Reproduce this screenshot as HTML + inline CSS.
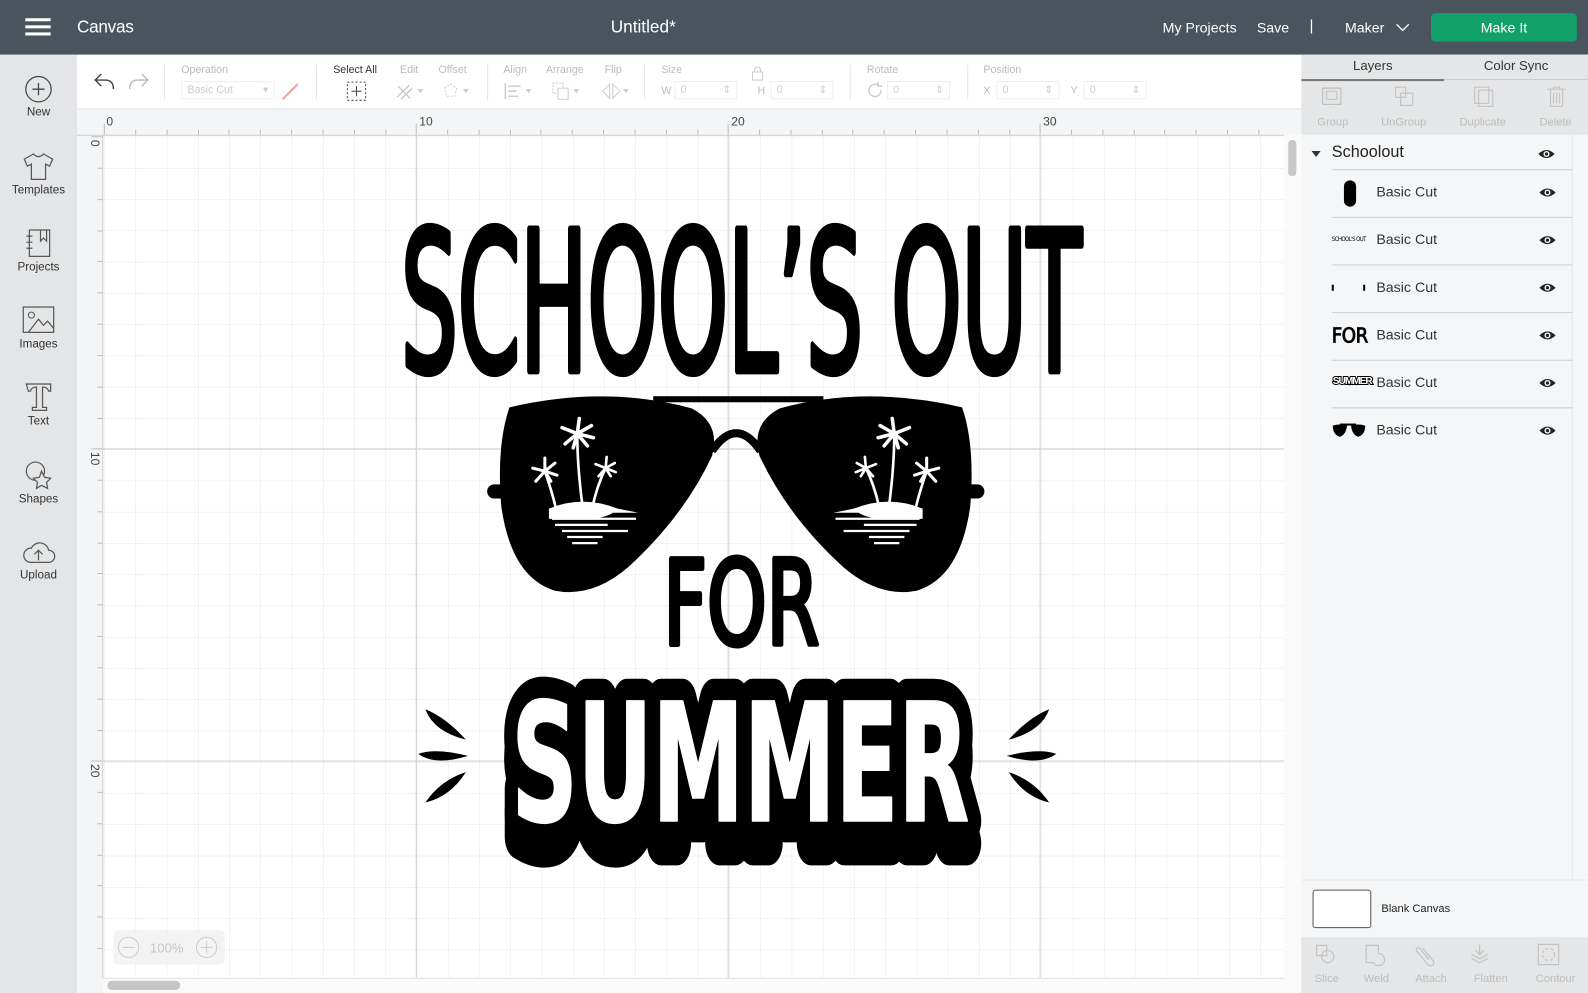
<!DOCTYPE html>
<html><head><meta charset="utf-8"><style>
*{margin:0;padding:0;box-sizing:border-box}
html,body{width:1588px;height:993px;overflow:hidden;background:#fff;font-family:"Liberation Sans",sans-serif}
#w{position:absolute;left:0;top:0;width:1568px;height:980px;transform:scale(1.01276,1.01327);transform-origin:0 0}
.a{position:absolute}
.top{left:0;top:0;width:1568px;height:54px;background:#4a545c;color:#fff}
.side{left:0;top:54px;width:76px;height:926px;background:#e4e5e6}
.si{position:absolute;left:0;width:76px;text-align:center;font-size:11.5px;color:#333}
.si svg{display:block;margin:0 auto 3px}
.tb{left:76px;top:54px;width:1209px;height:54px;background:#fff;border-bottom:1px solid #e2e2e2}
.lb{position:absolute;font-size:10.5px;color:#bbb}
.inp{position:absolute;border:1px solid #eee;height:18px;font-size:10.5px;color:#ccc;padding:2px 5px}
.sep{position:absolute;top:10px;width:1px;height:34px;background:#e5e5e5}
.rp{left:1285px;top:54px;width:283px;height:926px;background:#f5f6f7}
.row{position:absolute;left:1315px;width:238px;height:47px;border-top:1.5px solid #cfd0d1}
.row span{position:absolute;left:44px;top:13px;font-size:14px;color:#333}
.eye{position:absolute;right:16px;top:16px}
.bt{position:absolute;font-size:11px;color:#bdbdbd;text-align:center}
</style></head><body><div id="w">

<div class="a top">
 <div class="a" style="left:25px;top:18px;width:25px;height:3px;background:#fff;box-shadow:0 7px 0 #fff,0 14px 0 #fff"></div>
 <div class="a" style="left:76px;top:17px;font-size:17px;letter-spacing:-0.3px">Canvas</div>
 <div class="a" style="left:603px;top:17px;font-size:17px">Untitled*</div>
 <div class="a" style="left:1148px;top:19px;font-size:14px">My Projects</div>
 <div class="a" style="left:1241px;top:19px;font-size:14px">Save</div>
 <div class="a" style="left:1293px;top:17px;font-size:15px">|</div>
 <div class="a" style="left:1328px;top:19px;font-size:14px">Maker</div>
 <svg class="a" style="left:1378px;top:23px" width="14" height="9"><path d="M1 1l6 6 6-6" stroke="#fff" fill="none" stroke-width="1.3"/></svg>
 <div class="a" style="left:1413px;top:13px;width:144px;height:28px;background:#12a16b;border-radius:4px;text-align:center;line-height:28px;font-size:14px">Make It</div>
</div>

<div class="a side">
 <div class="si" style="top:20px"><svg width="28" height="28"><circle cx="14" cy="14" r="12.5" fill="none" stroke="#444" stroke-width="1.2"/><path d="M14 8v12M8 14h12" stroke="#444" stroke-width="1.3"/></svg>New</div>
 <div class="si" style="top:95px"><svg width="32" height="30"><path d="M11 3l-9 5 3 7 4-2v15h14V13l4 2 3-7-9-5q-5 5-10 0z" fill="none" stroke="#555" stroke-width="1.2"/></svg>Templates</div>
 <div class="si" style="top:171px"><svg width="30" height="30"><rect x="6" y="2" width="20" height="26" fill="none" stroke="#555" stroke-width="1.2"/><path d="M17 2v11l3-3 3 3V2M3 8h6M3 14h6M3 20h6" stroke="#555" fill="none" stroke-width="1.2"/></svg>Projects</div>
 <div class="si" style="top:247px"><svg width="34" height="30"><rect x="2" y="2" width="30" height="25" fill="none" stroke="#555" stroke-width="1.2"/><circle cx="10" cy="10" r="3" fill="none" stroke="#555"/><path d="M7 27l10-13 5 6 4-4 6 7" fill="none" stroke="#555" stroke-width="1.2"/></svg>Images</div>
 <div class="si" style="top:323px"><svg width="30" height="30"><path d="M3 2h24v7h-2q-1-4-6-4v20h4v3H9v-3h4V5q-5 0-6 4H5z" fill="none" stroke="#555" stroke-width="1.2"/></svg>Text</div>
 <div class="si" style="top:400px"><svg width="30" height="30"><circle cx="12" cy="11" r="9" fill="none" stroke="#555" stroke-width="1.2"/><path d="M18 11l3 6 6 1-4 4 1 6-6-3-5 3 1-6-4-4 6-1z" fill="#e4e5e6" stroke="#555" stroke-width="1.2"/></svg>Shapes</div>
 <div class="si" style="top:477px"><svg width="34" height="28"><path d="M9 24h18a6 6 0 0 0 0-12 9 9 0 0 0-17-2 7 7 0 0 0-1 14z" fill="none" stroke="#555" stroke-width="1.2"/><path d="M17 22v-9M13 16l4-4 4 4" fill="none" stroke="#555" stroke-width="1.2"/></svg>Upload</div>
</div>

<div class="a tb">
 <svg class="a" style="left:16px;top:17px" width="22" height="18"><path d="M8 2L2 8l6 6M2 8h10q8 0 8 9" fill="none" stroke="#444" stroke-width="1.4"/></svg>
 <svg class="a" style="left:50px;top:17px" width="22" height="18"><path d="M14 2l6 6-6 6M20 8h-10q-8 0-8 9" fill="none" stroke="#bbb" stroke-width="1.4"/></svg>
 <div class="sep" style="left:86px"></div>
 <div class="lb" style="left:103px;top:9px">Operation</div>
 <div class="inp" style="left:103px;top:26px;width:92px">Basic Cut<span style="float:right">▾</span></div>
 <svg class="a" style="left:200px;top:25px" width="22" height="22"><path d="M3 19L18 4" stroke="#f0a0a0" stroke-width="2"/></svg>
 <div class="sep" style="left:236px"></div>
 <div class="lb" style="left:253px;top:9px;color:#333">Select All</div>
 <svg class="a" style="left:266px;top:26px" width="20" height="20"><rect x="1" y="1" width="18" height="18" fill="none" stroke="#444" stroke-dasharray="2 2"/><path d="M10 5v10M5 10h10" stroke="#444"/></svg>
 <div class="lb" style="left:319px;top:9px">Edit</div>
 <svg class="a" style="left:314px;top:26px" width="30" height="20"><path d="M2 16L14 4M6 18L17 7M3 5l12 12" stroke="#ccc" stroke-width="1.5" fill="none"/><path d="M22 8l3 4 3-4z" fill="#ccc"/></svg>
 <div class="lb" style="left:357px;top:9px">Offset</div>
 <svg class="a" style="left:359px;top:26px" width="30" height="20"><path d="M10 3l6 4-2 8H6L4 7z" fill="none" stroke="#ccc" stroke-dasharray="2 1.5"/><path d="M22 8l3 4 3-4z" fill="#ccc"/></svg>
 <div class="sep" style="left:405px"></div>
 <div class="lb" style="left:421px;top:9px">Align</div>
 <svg class="a" style="left:421px;top:26px" width="30" height="20"><path d="M2 2v16M5 5h12M5 10h8M5 15h10" stroke="#ccc" stroke-width="1.5"/><path d="M22 8l3 4 3-4z" fill="#ccc"/></svg>
 <div class="lb" style="left:463px;top:9px">Arrange</div>
 <svg class="a" style="left:468px;top:26px" width="30" height="20"><rect x="2" y="2" width="10" height="10" fill="none" stroke="#ccc" stroke-dasharray="2 1"/><rect x="7" y="7" width="10" height="11" fill="#fff" stroke="#ccc"/><path d="M22 8l3 4 3-4z" fill="#ccc"/></svg>
 <div class="lb" style="left:521px;top:9px">Flip</div>
 <svg class="a" style="left:517px;top:26px" width="30" height="20"><path d="M9 3v14L2 10zM12 3v14l7-7z" fill="none" stroke="#ccc"/><path d="M22 8l3 4 3-4z" fill="#ccc"/></svg>
 <div class="sep" style="left:560px"></div>
 <div class="lb" style="left:577px;top:9px">Size</div>
 <div class="lb" style="left:577px;top:30px">W</div>
 <div class="inp" style="left:590px;top:26px;width:62px">0<span style="float:right">⇕</span></div>
 <svg class="a" style="left:665px;top:11px" width="14" height="16"><rect x="2" y="6" width="10" height="8" fill="none" stroke="#ccc"/><path d="M4 6V4a3 3 0 0 1 6 0v2" fill="none" stroke="#ccc"/></svg>
 <div class="lb" style="left:672px;top:30px">H</div>
 <div class="inp" style="left:685px;top:26px;width:62px">0<span style="float:right">⇕</span></div>
 <div class="sep" style="left:763px"></div>
 <div class="lb" style="left:780px;top:9px">Rotate</div>
 <svg class="a" style="left:779px;top:26px" width="18" height="18"><path d="M15 9a6 6 0 1 1-3-5M12 1v4h4" fill="none" stroke="#ccc" stroke-width="1.4"/></svg>
 <div class="inp" style="left:800px;top:26px;width:62px">0<span style="float:right">⇕</span></div>
 <div class="sep" style="left:879px"></div>
 <div class="lb" style="left:895px;top:9px">Position</div>
 <div class="lb" style="left:895px;top:30px">X</div>
 <div class="inp" style="left:908px;top:26px;width:62px">0<span style="float:right">⇕</span></div>
 <div class="lb" style="left:981px;top:30px">Y</div>
 <div class="inp" style="left:994px;top:26px;width:62px">0<span style="float:right">⇕</span></div>
</div>

<!-- rulers & canvas -->
<svg class="a" style="left:76px;top:108px" width="1209" height="872">
 <defs>
  <pattern id="g" x="27" y="27" width="30.85" height="30.85" patternUnits="userSpaceOnUse"><path d="M0 0V31M0 0H31" stroke="#e6e6e6" stroke-width="1"/></pattern>
 </defs>
 <rect width="1209" height="872" fill="#fff"/>
 <rect x="25" y="25" width="1167" height="832" fill="url(#g)"/>
 <g stroke="#cfcfcf" stroke-width="1"><path d="M335 25V857M643 25V857M951 25V857M25 335H1192M25 643H1192"/></g>
 <rect x="0" y="0" width="1209" height="25" fill="#f4f5f6"/>
 <rect x="0" y="0" width="25" height="872" fill="#f4f5f6"/>
 <path d="M0 25.5H1192M25.5 25V872" stroke="#ccc"/>
 <g stroke="#bbb"><path d="M58 20V25M89 20V25M120 20V25M150 20V25M181 20V25M212 20V25M243 20V25M274 20V25M305 20V25M366 20V25M397 20V25M428 20V25M458 20V25M489 20V25M520 20V25M551 20V25M582 20V25M613 20V25M674 20V25M705 20V25M736 20V25M766 20V25M797 20V25M828 20V25M859 20V25M890 20V25M921 20V25M982 20V25M1013 20V25M1044 20V25M1074 20V25M1105 20V25M1136 20V25M1167 20V25"/>
 <path d="M20 58H25M20 89H25M20 120H25M20 150H25M20 181H25M20 212H25M20 243H25M20 274H25M20 305H25M20 366H25M20 397H25M20 428H25M20 458H25M20 489H25M20 520H25M20 551H25M20 582H25M20 613H25M20 674H25M20 705H25M20 736H25M20 766H25M20 797H25M20 828H25"/>
 <path d="M27 14V25M335 14V25M643 14V25M951 14V25M14 27H25M14 335H25M14 643H25"/></g>
 <g font-size="12" fill="#444" font-family="Liberation Sans"><text x="29" y="16">0</text><text x="338" y="16">10</text><text x="646" y="16">20</text><text x="954" y="16">30</text>
 <text transform="translate(14,30) rotate(90)">0</text><text transform="translate(14,338) rotate(90)">10</text><text transform="translate(14,646) rotate(90)">20</text></g>
 <rect x="1192" y="25" width="17" height="847" fill="#fafafa"/>
 <rect x="1196" y="30" width="8" height="36" rx="4" fill="#c8c8c8"/>
 <rect x="25" y="857" width="1167" height="15" fill="#fafafa"/><path d="M25 857.5H1192" stroke="#e3e3e3"/>
 <rect x="30" y="860" width="72" height="9" rx="4.5" fill="#c6c6c6"/>
 <rect x="36" y="810" width="110" height="34" rx="5" fill="#f2f2f2" opacity=".9"/>
 <circle cx="51" cy="827" r="10" fill="none" stroke="#ccc"/><path d="M45 827h12" stroke="#ccc"/>
 <circle cx="128" cy="827" r="10" fill="none" stroke="#ccc"/><path d="M122 827h12M128 821v12" stroke="#ccc"/>
 <text x="72" y="832" font-size="13" fill="#c4c4c4">100%</text>
</svg>

<!-- artwork -->
<svg class="a" style="left:0;top:0" width="1568" height="980">
 <g font-family="DejaVu Sans Condensed, DejaVu Sans, sans-serif" stroke-linejoin="round">
  <text x="396" y="366" font-size="192" textLength="672" lengthAdjust="spacingAndGlyphs" fill="#000" stroke="#000" stroke-width="7">SCHOOL’S OUT</text>
  <text x="655" y="636" font-size="116" textLength="154" lengthAdjust="spacingAndGlyphs" fill="#000" stroke="#000" stroke-width="5">FOR</text>
  <g font-weight="bold">
  <text x="505" y="832" font-size="162" textLength="452" lengthAdjust="spacingAndGlyphs" fill="#000" stroke="#000" stroke-width="44">SUMMER</text>
  <text x="505" y="810" font-size="162" textLength="452" lengthAdjust="spacingAndGlyphs" fill="#000" stroke="#000" stroke-width="44">SUMMER</text>
  <text x="505" y="810" font-size="162" textLength="452" lengthAdjust="spacingAndGlyphs" fill="#fff" stroke="#fff" stroke-width="2">SUMMER</text>
  </g>
 </g>
 <!-- glasses -->
 <rect x="645" y="391" width="168" height="6" fill="#000"/>
 <path d="M703 445Q727 410 751 445" fill="none" stroke="#000" stroke-width="8"/>
 <rect x="481" y="478" width="20" height="14" rx="7"/>
 <rect x="952" y="478" width="20" height="14" rx="7"/>
 <path d="M503 402Q598 380 683 403Q712 418 703 450Q675 510 620 560Q585 590 548 583Q505 570 495 500Q490 440 503 402Z" fill="#000"/>
 <path d="M950 402Q855 380 770 403Q741 418 750 450Q778 510 833 560Q868 590 905 583Q948 570 958 500Q963 440 950 402Z" fill="#000"/>
 <g id="palm" fill="#fff" stroke="#fff">
  <path d="M542 502Q575 488 610 502L630 506H605Q600 510 585 512Q560 513 542 512Z" stroke="none"/>
  <path d="M545 512H628M548 518H600M555 524H620M560 530H595M565 536H590" stroke-width="2.2"/>
  <path d="M549 502Q545 485 538 465M575 498Q570 460 570 428M585 500Q590 478 598 462" fill="none" stroke-width="2.6"/>
  <path d="M570 428l-15 -6M570 428l-12 10M570 428l2 -15M570 428l14 -8M570 428l16 4M570 428l10 12M570 428l-4 14" stroke-width="3.5" stroke-linecap="round"/>
  <path d="M538 465l-12 -3M538 465l-9 10M538 465l0 -13M538 465l10 -8M538 465l12 4M538 465l6 10" stroke-width="3" stroke-linecap="round"/>
  <path d="M598 462l-10 -4M598 462l-7 8M598 462l1 -11M598 462l9 -5M598 462l10 4M598 462l5 8" stroke-width="2.6" stroke-linecap="round"/>
 </g>
 <use href="#palm" transform="translate(1453,0) scale(-1,1)"/>
 <!-- splashes -->
 <g fill="#000">
  <path d="M460 730Q440 708 420 700Q428 722 460 730Z"/>
  <path d="M462 746Q430 738 413 744Q430 756 462 746Z"/>
  <path d="M460 762Q435 770 420 792Q445 786 460 762Z"/>
  <path d="M996 730Q1016 708 1036 700Q1028 722 996 730Z"/>
  <path d="M994 746Q1026 738 1043 744Q1026 756 994 746Z"/>
  <path d="M996 762Q1021 770 1036 792Q1011 786 996 762Z"/>
 </g>
</svg>

<!-- right panel -->
<div class="a rp">
 <div class="a" style="left:0;top:0;width:283px;height:79px;background:#e5e6e7"></div>
 <div class="a" style="left:0;top:3px;width:141px;text-align:center;font-size:13px;color:#333">Layers</div>
 <div class="a" style="left:141px;top:3px;width:142px;text-align:center;font-size:13px;color:#333">Color Sync</div>
 <div class="a" style="left:0;top:24px;width:141px;height:2px;background:#777"></div>
 <div class="a" style="left:141px;top:24px;width:142px;height:1px;background:#ccc"></div>
 <svg class="a" style="left:18px;top:30px" width="24" height="22"><rect x="3" y="3" width="18" height="16" fill="none" stroke="#c0c0c0" stroke-width="1.2"/><rect x="7" y="6" width="10" height="8" fill="none" stroke="#c0c0c0"/></svg>
 <svg class="a" style="left:90px;top:30px" width="24" height="22"><rect x="3" y="2" width="10" height="10" fill="none" stroke="#c0c0c0"/><rect x="8" y="8" width="12" height="12" fill="none" stroke="#c0c0c0"/></svg>
 <svg class="a" style="left:168px;top:30px" width="24" height="22"><rect x="3" y="2" width="14" height="16" fill="none" stroke="#c0c0c0"/><rect x="7" y="5" width="14" height="16" fill="none" stroke="#c0c0c0"/></svg>
 <svg class="a" style="left:240px;top:30px" width="24" height="22"><path d="M3 4h18M6 4v17h12V4M9 8v10M12 8v10M15 8v10M9 4V2h6v2" fill="none" stroke="#c0c0c0"/></svg>
 <div class="bt" style="left:0;top:61px;width:62px">Group</div>
 <div class="bt" style="left:70px;top:61px;width:62px">UnGroup</div>
 <div class="bt" style="left:148px;top:61px;width:62px">Duplicate</div>
 <div class="bt" style="left:220px;top:61px;width:62px">Delete</div>
 <div class="a" style="left:0;top:79px;width:268px;height:735px;background:#f5f6f7;border-right:1px solid #e8e8e8"></div>
 <svg class="a" style="left:10px;top:94px" width="10" height="8"><path d="M0 1h9L4.5 7z" fill="#333"/></svg>
 <div class="a" style="left:30px;top:88px;font-size:16px;color:#222">Schoolout</div>
 <svg class="a" style="left:233px;top:92px" width="18" height="12"><path d="M1 6Q9 -2 17 6Q9 14 1 6Z" fill="#222"/><circle cx="9" cy="6" r="3" fill="#f5f6f7"/><circle cx="9" cy="6" r="1.6" fill="#222"/></svg>
 <div class="a" style="left:0;top:814px;width:283px;height:57px;background:#f5f6f7;border-top:1px solid #e5e5e5"></div>
 <div class="a" style="left:11px;top:824px;width:58px;height:38px;background:#fff;border:1px solid #555;border-radius:3px"></div>
 <div class="a" style="left:79px;top:837px;font-size:11px;color:#222">Blank Canvas</div>
 <div class="a" style="left:0;top:871px;width:283px;height:55px;background:#e5e6e7"></div>
 <div class="bt" style="left:8px;top:906px;width:34px">Slice</div>
 <div class="bt" style="left:56px;top:906px;width:36px">Weld</div>
 <div class="bt" style="left:106px;top:906px;width:44px">Attach</div>
 <div class="bt" style="left:164px;top:906px;width:46px">Flatten</div>
 <div class="bt" style="left:226px;top:906px;width:50px">Contour</div>
 <svg class="a" style="left:12px;top:876px" width="270" height="24" fill="none" stroke="#c4c4c4" stroke-width="1.2">
  <rect x="3" y="3" width="10" height="10"/><circle cx="14" cy="14" r="6"/>
  <path d="M52 3h12v8a6 6 0 1 1-5 9h-7z"/>
  <path d="M108 6l10 12a3 3 0 0 1-5 4l-11-13a2 2 0 0 1 3-3l9 11"/>
  <path d="M164 2v10M160 8l4 4 4-4M156 12l8 4 8-4M156 16l8 4 8-4"/>
  <rect x="222" y="2" width="20" height="20"/><circle cx="232" cy="12" r="6" stroke-dasharray="3 2"/>
 </svg>
</div>
<div class="row" style="top:167px"><svg class="a" style="left:8px;top:8px" width="20" height="30"><rect x="4" y="2" width="12" height="26" rx="6" fill="#000"/></svg><span>Basic Cut</span><svg class="eye" width="18" height="12"><path d="M1 6Q9 -2 17 6Q9 14 1 6Z" fill="#222"/><circle cx="9" cy="6" r="3" fill="#f5f6f7"/><circle cx="9" cy="6" r="1.6" fill="#222"/></svg></div>
<div class="row" style="top:214px"><div class="a" style="left:0;top:18px;font-size:6px;letter-spacing:-0.6px;font-family:'DejaVu Sans Condensed',sans-serif">SCHOOL'S OUT</div><span>Basic Cut</span><svg class="eye" width="18" height="12"><path d="M1 6Q9 -2 17 6Q9 14 1 6Z" fill="#222"/><circle cx="9" cy="6" r="3" fill="#f5f6f7"/><circle cx="9" cy="6" r="1.6" fill="#222"/></svg></div>
<div class="row" style="top:261px"><div class="a" style="left:0;top:19px;width:2px;height:6px;background:#000"></div><div class="a" style="left:31px;top:19px;width:2px;height:6px;background:#000"></div><span>Basic Cut</span><svg class="eye" width="18" height="12"><path d="M1 6Q9 -2 17 6Q9 14 1 6Z" fill="#222"/><circle cx="9" cy="6" r="3" fill="#f5f6f7"/><circle cx="9" cy="6" r="1.6" fill="#222"/></svg></div>
<div class="row" style="top:308px"><div class="a" style="left:0;top:10px;font-size:20px;letter-spacing:-0.5px;font-family:'DejaVu Sans Condensed',sans-serif;-webkit-text-stroke:0.8px #000">FOR</div><span>Basic Cut</span><svg class="eye" width="18" height="12"><path d="M1 6Q9 -2 17 6Q9 14 1 6Z" fill="#222"/><circle cx="9" cy="6" r="3" fill="#f5f6f7"/><circle cx="9" cy="6" r="1.6" fill="#222"/></svg></div>
<div class="row" style="top:355px"><div class="a" style="left:1px;top:15px;font-size:10px;font-weight:bold;letter-spacing:-1px;color:#fff;-webkit-text-stroke:2px #000;paint-order:stroke">SUMMER</div><span>Basic Cut</span><svg class="eye" width="18" height="12"><path d="M1 6Q9 -2 17 6Q9 14 1 6Z" fill="#222"/><circle cx="9" cy="6" r="3" fill="#f5f6f7"/><circle cx="9" cy="6" r="1.6" fill="#222"/></svg></div>
<div class="row" style="top:402px"><svg class="a" style="left:0;top:14px" width="34" height="16"><rect x="8" y="1" width="16" height="2"/><path d="M1 3Q8 1 15 3Q14 12 8 14Q1 12 1 3ZM33 3Q26 1 19 3Q20 12 26 14Q33 12 33 3Z"/></svg><span>Basic Cut</span><svg class="eye" width="18" height="12"><path d="M1 6Q9 -2 17 6Q9 14 1 6Z" fill="#222"/><circle cx="9" cy="6" r="3" fill="#f5f6f7"/><circle cx="9" cy="6" r="1.6" fill="#222"/></svg></div>

</div></body></html>
